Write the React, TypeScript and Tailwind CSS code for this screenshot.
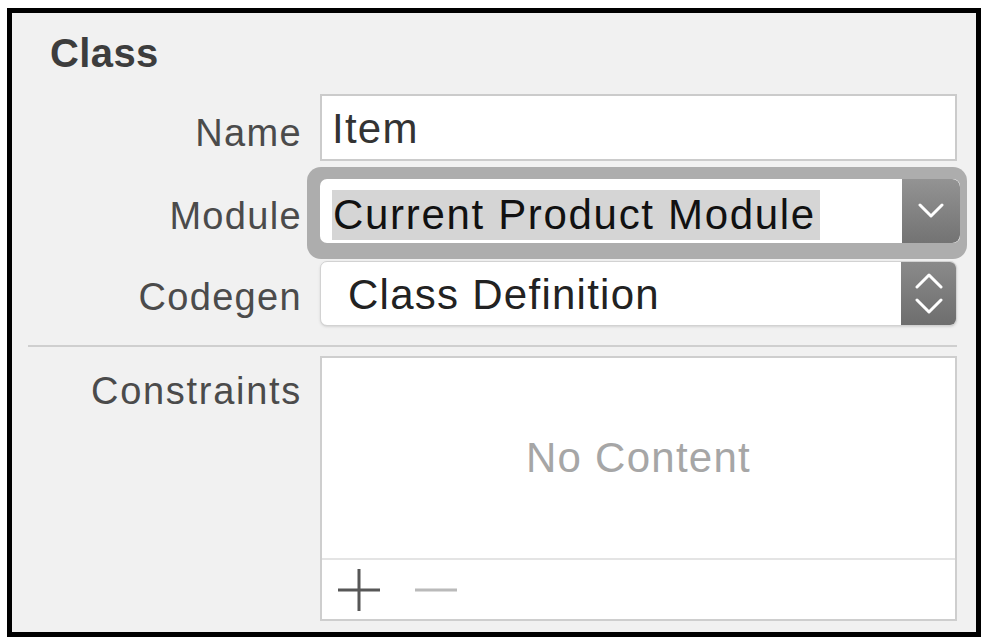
export default function App() {
  const font = { fontFamily: '"Liberation Sans", Arial, sans-serif' }

  return (
    <div className="w-[986px] h-[642px] bg-white pt-[8px] pl-[7px]" style={font}>
      <div className="w-[974px] h-[629px] border-[5px] border-black bg-[#f1f1f1] flex flex-col">
        {/* header */}
        <div className="pt-[20px] pl-[38px] text-[40px] leading-[40px] font-bold tracking-[0.01em] text-[#3d3d3d]">
          Class
        </div>

        {/* Name */}
        <div className="mt-[21px] flex">
          <div className="w-[290px] pt-[20px] text-right text-[38px] leading-[38px] tracking-[0.035em] text-[#4b4b4b]">
            Name
          </div>
          <div className="ml-[18px] w-[637px] h-[67px] border-2 border-[#cbcbcb] bg-white pl-[10px] pt-[12px] text-[42px] leading-[42px] tracking-[0.03em] text-[#333]">
            Item
          </div>
        </div>

        {/* Module (focused popup) */}
        <div className="mt-[18px] flex">
          <div className="w-[290px] pt-[18px] text-right text-[38px] leading-[38px] tracking-[0.035em] text-[#4b4b4b]">
            Module
          </div>
          <div className="relative ml-[18px] w-[640px] h-[64px]">
            <div className="absolute -top-[12px] -left-[13px] -right-[7px] -bottom-[16px] rounded-[14px] bg-[#adadad]" />
            <div className="relative flex h-full rounded-[7px] bg-white overflow-hidden">
              <div className="flex-1 pl-[12px] pt-[11px]">
                <span className="inline-block bg-[#d5d5d5] pl-[1px] pr-[4px] text-[42px] leading-[50px] tracking-[0.04em] text-[#111]">
                  Current Product Module
                </span>
              </div>
              <div className="w-[58px] h-full flex items-center justify-center rounded-r-[8px] bg-gradient-to-b from-[#939393] to-[#737373]">
                <svg width="26" height="16" viewBox="0 0 26 16" fill="none">
                  <path d="M2 2l11 11L24 2" stroke="white" strokeWidth="3" strokeLinecap="round" strokeLinejoin="round" />
                </svg>
              </div>
            </div>
          </div>
        </div>

        {/* Codegen */}
        <div className="mt-[18px] flex">
          <div className="w-[290px] pt-[17px] text-right text-[38px] leading-[38px] tracking-[0.035em] text-[#4b4b4b]">
            Codegen
          </div>
          <div className="ml-[18px] w-[637px] h-[65px] flex rounded-[7px] bg-white border border-[#d2d2d2] shadow-sm overflow-hidden">
            <div className="flex-1 pl-[27px] pt-[12px] text-[42px] leading-[42px] tracking-[0.03em] text-[#222]">
              Class Definition
            </div>
            <div className="w-[55px] h-full flex items-center justify-center bg-gradient-to-b from-[#8a8a8a] to-[#6e6e6e]">
              <svg width="28" height="42" viewBox="0 0 28 42" fill="none">
                <path d="M2 14L14 2l12 12" stroke="white" strokeWidth="3" strokeLinecap="round" strokeLinejoin="round" />
                <path d="M2 27l12 12 12-12" stroke="white" strokeWidth="3" strokeLinecap="round" strokeLinejoin="round" />
              </svg>
            </div>
          </div>
        </div>

        <div className="mt-[19px] ml-[16px] w-[929px] h-[2px] bg-[#cfcfcf]" />

        {/* Constraints */}
        <div className="mt-[9px] flex">
          <div className="w-[290px] pt-[16px] text-right text-[38px] leading-[38px] tracking-[0.045em] text-[#4b4b4b]">
            Constraints
          </div>
          <div className="ml-[18px] w-[637px] h-[265px] border-2 border-[#cecece] bg-white flex flex-col">
            <div className="flex-1 flex items-center justify-center text-[42px] leading-[42px] tracking-[0.03em] text-[#a6a6a6]">
              No Content
            </div>
            <div className="h-[2px] bg-[#e4e4e4]" />
            <div className="h-[59px] flex items-center pl-[16px] gap-[35px]">
              <svg width="42" height="42" viewBox="0 0 42 42">
                <path d="M0 21h42M21 0v42" stroke="#575757" strokeWidth="3" />
              </svg>
              <svg width="42" height="4" viewBox="0 0 42 4">
                <path d="M0 2h42" stroke="#bababa" strokeWidth="3" />
              </svg>
            </div>
          </div>
        </div>
      </div>
    </div>
  )
}
